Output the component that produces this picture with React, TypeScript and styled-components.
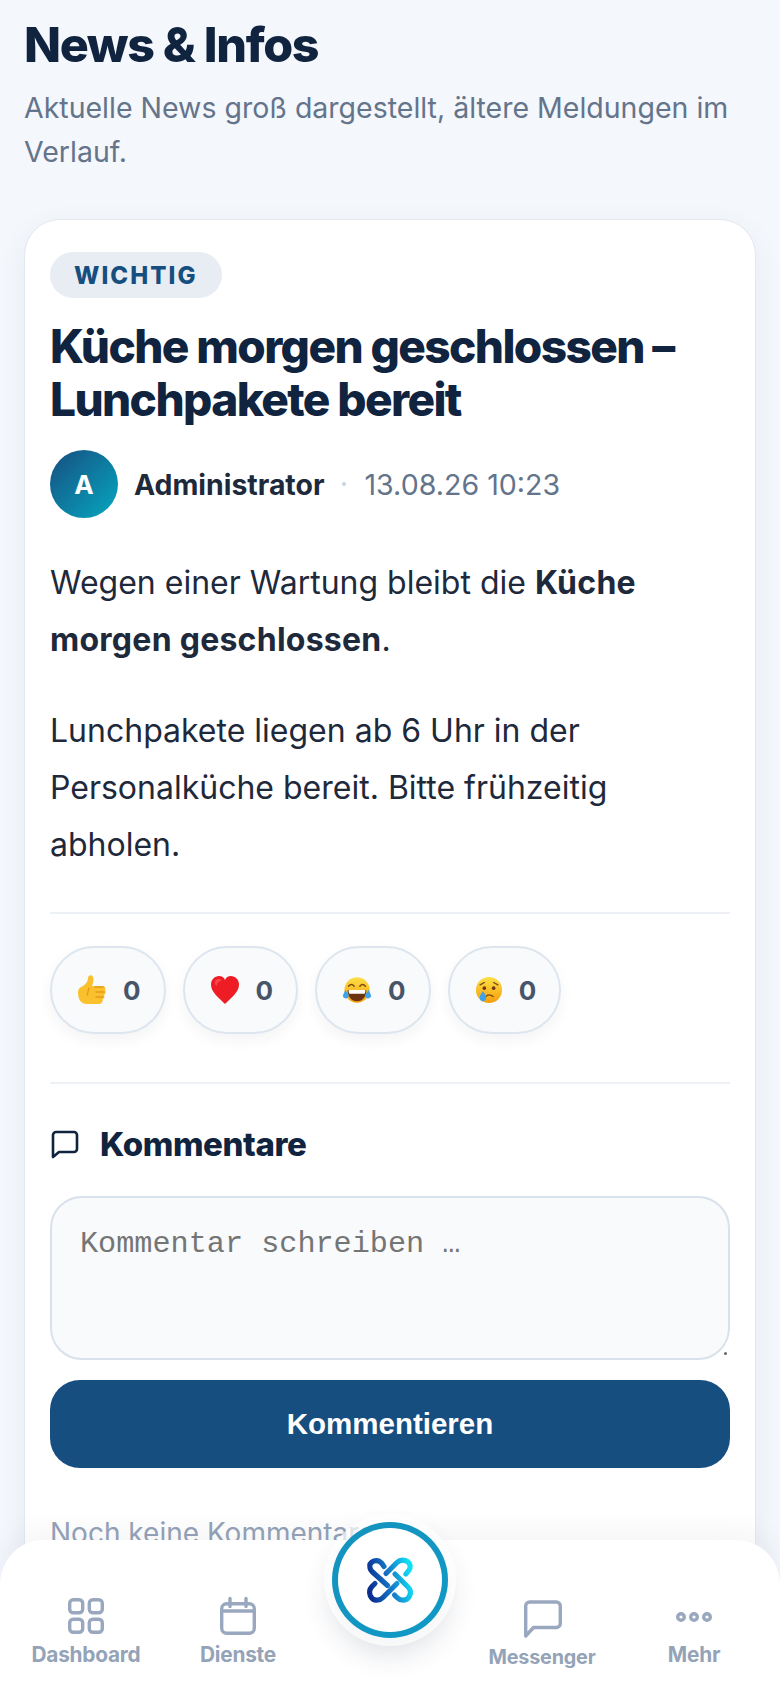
import styled, { createGlobalStyle } from 'styled-components'

const GlobalStyle = createGlobalStyle`
  html, body {
    margin: 0;
    height: 1688px;
    overflow: hidden;
    background: #f4f7fc;
    font-family: Inter, "Noto Sans", sans-serif;
    -webkit-font-smoothing: antialiased;
  }
  * { box-sizing: border-box; }
`

const Page = styled.main`
  padding: 18px 24px 0;
`

const Title = styled.h1`
  margin: 0;
  font-size: 48.4px;
  line-height: 54px;
  font-weight: 800;
  letter-spacing: -0.028em;
  color: #10233f;
`

const Subtitle = styled.p`
  margin: 14px 0 0;
  font-size: 28.5px;
  line-height: 44px;
  color: #64748b;
`

const Card = styled.article`
  margin-top: 45px;
  padding: 32px 25px 40px;
  background: #fff;
  border: 1px solid #e2e8f0;
  border-radius: 36px;
  box-shadow: 0 8px 30px rgba(30, 45, 73, 0.06);
`

const Badge = styled.span`
  display: inline-flex;
  align-items: center;
  height: 46px;
  padding: 0 24px;
  border-radius: 23px;
  background: #e8edf4;
  color: #164e80;
  font-size: 24px;
  font-weight: 800;
  letter-spacing: 0.085em;
`

const Headline = styled.h2`
  margin: 22px 0 0;
  font-size: 46px;
  line-height: 53px;
  font-weight: 800;
  letter-spacing: -0.035em;
  color: #10233f;
`

const Meta = styled.div`
  display: flex;
  align-items: center;
  margin-top: 24px;
  height: 68px;
`

const Avatar = styled.div`
  width: 68px;
  height: 68px;
  border-radius: 50%;
  margin-right: 16px;
  display: flex;
  align-items: center;
  justify-content: center;
  background: linear-gradient(135deg, #164e80, #06a8c0);
  color: #fff;
  font-size: 26px;
  font-weight: 700;
`

const Author = styled.span`
  font-size: 28.4px;
  font-weight: 700;
  color: #1e293b;
`

const Dot = styled.span`
  width: 4px;
  height: 4px;
  margin: 0 18px;
  border-radius: 50%;
  background: #cbd5e1;
`

const Stamp = styled.span`
  font-size: 28.6px;
  color: #64748b;
`

const Body = styled.div`
  margin-top: 36px;
  padding-bottom: 39px;
  border-bottom: 2px solid #edf1f6;
  color: #1e293b;
  font-size: 32px;
  line-height: 57px;

  p {
    margin: 0 0 34px;
  }
  p:last-child {
    margin: 0;
  }
  strong {
    font-weight: 700;
    letter-spacing: 0.008em;
  }
`

const Reactions = styled.div`
  display: flex;
  gap: 17px;
  padding: 32px 0 48px;
  border-bottom: 2px solid #edf1f6;
`

const ReactionButton = styled.button`
  display: flex;
  align-items: center;
  gap: 16px;
  height: 88px;
  padding: 0 23px 0 25px;
  border: 2px solid #dde5ee;
  border-radius: 44px;
  background: #f8fafc;
  box-shadow: 0 6px 14px rgba(30, 45, 73, 0.05);
  color: #475569;
  font-family: inherit;
  font-size: 26px;
  font-weight: 700;
`

const CommentsHead = styled.h3`
  display: flex;
  align-items: center;
  gap: 20px;
  margin: 38px 0 0;
  font-size: 33px;
  line-height: 44px;
  font-weight: 800;
  letter-spacing: -0.012em;
  color: #10233f;
`

const CommentIcon = styled.svg`
  width: 30px;
  height: 30px;
  fill: none;
  stroke: #10233f;
  stroke-width: 2.6;
  stroke-linecap: round;
  stroke-linejoin: round;
`

const CommentField = styled.div`
  position: relative;
  margin-top: 30px;

  &::after {
    content: '';
    position: absolute;
    right: 3px;
    bottom: 5px;
    width: 3px;
    height: 3px;
    border-radius: 50%;
    background: #666;
  }
`

const CommentBox = styled.textarea`
  display: block;
  width: 100%;
  height: 164px;
  padding: 29px 28px;
  border: 2px solid #d9e1ec;
  border-radius: 32px;
  background: #f8fafc;
  resize: none;
  font-family: "Liberation Mono", "Courier New", monospace;
  font-size: 30.2px;
  line-height: 34px;

  &::placeholder {
    color: #757575;
  }
`

const SubmitButton = styled.button`
  display: block;
  width: 100%;
  height: 88px;
  margin-top: 20px;
  border: 0;
  border-radius: 30px;
  background: #164e80;
  color: #fff;
  font-family: "Liberation Sans", Arial, sans-serif;
  font-size: 29.5px;
  font-weight: 700;
`

const Empty = styled.p`
  margin: 47px 0 0;
  font-size: 28px;
  line-height: 36px;
  color: #94a3b8;
`

const Nav = styled.nav`
  position: absolute;
  left: 0;
  right: 0;
  bottom: 0;
  height: 148px;
  padding: 0 10px;
  display: grid;
  grid-template-columns: repeat(5, 1fr);
  background: #fff;
  border-radius: 44px 44px 0 0;
  box-shadow: 0 -8px 30px rgba(30, 45, 73, 0.05);

  &::before {
    content: '';
    position: absolute;
    left: 0;
    right: 0;
    top: -46px;
    height: 90px;
    z-index: -1;
    background: linear-gradient(rgba(30, 45, 73, 0), rgba(30, 45, 73, 0.07));
  }
`

const NavItem = styled.a<{ $drop?: number; $size?: number }>`
  display: flex;
  flex-direction: column;
  align-items: center;
  gap: 3px;
  padding-top: ${({ $drop }) => 56 + ($drop ?? 0)}px;
  color: #94a3b8;
  font-size: ${({ $size }) => $size ?? 20.8}px;
  line-height: 28px;
  font-weight: 700;
  letter-spacing: -0.01em;
`

const NavIcon = styled.svg`
  width: 42px;
  height: 42px;
  fill: none;
  stroke: #9aa8bf;
  stroke-width: 3.4;
  stroke-linecap: round;
  stroke-linejoin: round;
`

const Fab = styled.button`
  position: absolute;
  left: 50%;
  top: -18px;
  width: 116px;
  height: 116px;
  margin-left: -58px;
  padding: 0;
  display: flex;
  align-items: center;
  justify-content: center;
  border-radius: 50%;
  background: linear-gradient(#fff, #fff) padding-box,
    linear-gradient(135deg, #1592bd, #0f9ac6) border-box;
  border: 6px solid transparent;
  box-shadow: 0 0 0 8px rgba(255, 255, 255, 0.7), 0 14px 30px rgba(30, 45, 73, 0.16);
`

const Logo = () => (
  <svg width="60" height="60" viewBox="0 0 60 60" fill="none" strokeWidth="5.2" strokeLinecap="round">
    <defs>
      <linearGradient id="logoInk" gradientUnits="userSpaceOnUse" x1="9" y1="34" x2="51" y2="26">
        <stop offset="0" stopColor="#0a2f90" />
        <stop offset="0.5" stopColor="#1578c8" />
        <stop offset="1" stopColor="#0fe0f5" />
      </linearGradient>
    </defs>
    <g stroke="url(#logoInk)">
      <path d="M24 16.500 21.500 13C17 8 8.500 11.500 10 18c.3 1.500 1 2.500 2 3.500L27.500 35.500" />
      <path d="M15 33.500 12 36.500C7 42 10.500 51 18 50c2-.2 3.500-1 5-2.500L37 33.500" />
      <path d="M26 23.500 37 12.500C42 7.500 51.500 11 50 18c-.3 1.500-1 2.500-2 3.500L46 24" />
      <path d="M35 24 48 37c5 5 1.500 14-6 13-2-.2-3.500-1-5-2.500L34.500 45" />
    </g>
  </svg>
)

const ThumbIcon = () => (
  <svg width="30" height="32" viewBox="0 0 30 32">
    <path fill="#fbc02d" d="M1 18c0-3 2-5 5-6 3-2 5-5 5-8 0-3 4-4 5-1 1 3 0 6-1 9h10c3 0 4 2 3 4 1 2 1 3-1 5 1 2 0 3-1 4 0 3-2 5-4 5H10C4 30 1 26 1 18z" />
    <path fill="none" stroke="#e59a1c" strokeWidth="1.4" strokeLinecap="round" d="M18 13h8M19 18h8M19 23h7M12 14c-1 3-1 5-2 7" />
  </svg>
)

const HeartIcon = () => (
  <svg width="30" height="30" viewBox="0 0 30 30">
    <path fill="#ee1c25" d="M15 29C8 22 1 17 1 9.500 1 4.500 5 1 9 1c3 0 5 1.500 6 4 1-2.500 3-4 6-4 4 0 8 3.500 8 8.500C29 17 22 22 15 29z" />
    <path fill="#ff6b6b" opacity="0.6" d="M6 5c2-1.500 5-1 5.500 .5C9 6 7 8 6.500 11 4.500 9.500 4.500 6.500 6 5z" />
  </svg>
)

const JoyIcon = () => (
  <svg width="30" height="30" viewBox="0 0 32 30">
    <defs>
      <linearGradient id="faceJoy" x1="0" y1="0" x2="0" y2="1">
        <stop offset="0" stopColor="#fde047" />
        <stop offset="1" stopColor="#f59e0b" />
      </linearGradient>
    </defs>
    <circle cx="16" cy="15" r="13.500" fill="url(#faceJoy)" />
    <path fill="none" stroke="#7c4a10" strokeWidth="1.6" strokeLinecap="round" d="M7 11c2-2.500 4-2.500 6 0M19 11c2-2.500 4-2.500 6 0" />
    <path fill="#6b3410" d="M6 15h20c0 7-4 12-10 12S6 22 6 15z" />
    <path fill="#fff" d="M7 15h18c0 1.500-.3 3-.8 4H7.800C7.300 18 7 16.500 7 15z" />
    <path fill="#3ea2e8" d="M3.500 15c2 2.500 4.500 5 3.500 7.500-1 2-5 2-6-.5-.5-2 1.500-4 2.500-7zM28.500 15c-2 2.500-4.500 5-3.500 7.500 1 2 5 2 6-.5.5-2-1.500-4-2.500-7z" />
  </svg>
)

const CryIcon = () => (
  <svg width="28" height="30" viewBox="0 0 30 30">
    <defs>
      <linearGradient id="faceCry" x1="0" y1="0" x2="0" y2="1">
        <stop offset="0" stopColor="#fde047" />
        <stop offset="1" stopColor="#f59e0b" />
      </linearGradient>
    </defs>
    <circle cx="15" cy="15" r="14" fill="url(#faceCry)" />
    <circle cx="10" cy="13" r="1.900" fill="#6b3410" />
    <circle cx="20" cy="13" r="1.900" fill="#6b3410" />
    <path fill="none" stroke="#7c4a10" strokeWidth="1.400" strokeLinecap="round" d="M5.500 9.500 10 7M24.500 9.500 20 7M11.500 22c2-2.500 5-2.500 8 0" />
    <path fill="#3ea2e8" d="M8.500 16c1.800 3 3.500 5 3.500 7.500 0 2-1.500 3.500-3.500 3.500S5 25.500 5 23.500C5 21 6.700 19 8.500 16z" />
  </svg>
)

const reactions = [ThumbIcon, HeartIcon, JoyIcon, CryIcon]

export default function App() {
  return (
    <>
      <GlobalStyle />
      <Page>
        <Title>News &amp; Infos</Title>
        <Subtitle>Aktuelle News groß dargestellt, ältere Meldungen im Verlauf.</Subtitle>
        <Card>
          <Badge>WICHTIG</Badge>
          <Headline>Küche morgen geschlossen – Lunchpakete bereit</Headline>
          <Meta>
            <Avatar>A</Avatar>
            <Author>Administrator</Author>
            <Dot />
            <Stamp>13.08.26 10:23</Stamp>
          </Meta>
          <Body>
            <p>
              Wegen einer Wartung bleibt die <strong>Küche morgen geschlossen</strong>.
            </p>
            <p>Lunchpakete liegen ab 6 Uhr in der Personalküche bereit. Bitte frühzeitig abholen.</p>
          </Body>
          <Reactions>
            {reactions.map((Emoji, i) => (
              <ReactionButton key={i}>
                <Emoji />
                <span>0</span>
              </ReactionButton>
            ))}
          </Reactions>
          <CommentsHead>
            <CommentIcon viewBox="0 0 30 30">
              <path d="M3 6a3 3 0 0 1 3-3h18a3 3 0 0 1 3 3v14a3 3 0 0 1-3 3H9l-6 5z" />
            </CommentIcon>
            Kommentare
          </CommentsHead>
          <CommentField>
            <CommentBox placeholder="Kommentar schreiben …" />
          </CommentField>
          <SubmitButton>Kommentieren</SubmitButton>
          <Empty>Noch keine Kommentare</Empty>
        </Card>
      </Page>
      <Nav>
        <NavItem>
          <NavIcon viewBox="0 0 42 42">
            <rect x="4.700" y="3.700" width="13" height="13" rx="3.500" />
            <rect x="24.300" y="3.700" width="13" height="13" rx="3.500" />
            <rect x="4.700" y="23.300" width="13" height="13" rx="3.500" />
            <rect x="24.300" y="23.300" width="13" height="13" rx="3.500" />
          </NavIcon>
          Dashboard
        </NavItem>
        <NavItem>
          <NavIcon viewBox="0 0 42 42">
            <rect x="4.700" y="7.700" width="32.600" height="29.600" rx="5" />
            <path d="M4.700 15h32.600M13 2.500v8M29 2.500v8" />
          </NavIcon>
          Dienste
        </NavItem>
        <span />
        <NavItem $drop={2} $size={19.8}>
          <NavIcon viewBox="0 0 42 42">
            <path d="M4.700 8a4 4 0 0 1 4-4h26.600a4 4 0 0 1 4 4v17.500a4 4 0 0 1-4 4H12.500l-7.800 8.500z" />
          </NavIcon>
          Messenger
        </NavItem>
        <NavItem>
          <NavIcon viewBox="0 0 42 42">
            <circle cx="8" cy="21" r="3.300" />
            <circle cx="21" cy="21" r="3.300" />
            <circle cx="34" cy="21" r="3.300" />
          </NavIcon>
          Mehr
        </NavItem>
        <Fab aria-label="Start">
          <Logo />
        </Fab>
      </Nav>
    </>
  )
}
